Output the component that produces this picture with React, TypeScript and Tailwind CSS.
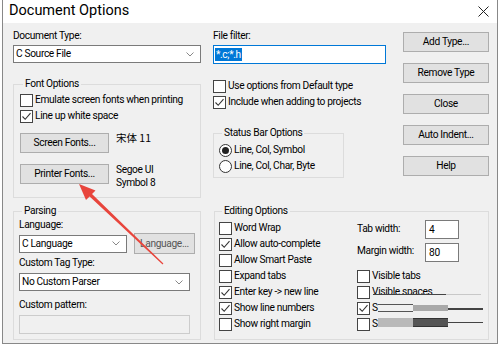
import React from 'react';

const font = "font-['Roboto','Liberation_Sans',sans-serif]";

function Check({ checked, label, extra, className = '' }: { checked?: boolean; label?: string; extra?: React.ReactNode; className?: string }) {
  return (
    <div className={`relative flex items-center h-[16px] ${className}`}>
      <div className="w-[13px] h-[13px] bg-white border border-[#444] flex items-center justify-center shrink-0">
        {checked && (
          <svg width="11" height="11" viewBox="0 0 11 11">
            <path d="M1.5 5.5 L4.2 8.3 L9.5 2.2" fill="none" stroke="#333" strokeWidth="1.1" />
          </svg>
        )}
      </div>
      {label && <span className="ml-[2px] whitespace-nowrap">{label}</span>}
      {extra}
    </div>
  );
}

function Radio({ checked, label }: { checked?: boolean; label: string }) {
  return (
    <div className="flex items-center h-[16px]">
      <div className="w-[13px] h-[13px] rounded-full bg-white border border-[#333] flex items-center justify-center shrink-0">
        {checked && <div className="w-[7px] h-[7px] rounded-full bg-[#222]" />}
      </div>
      <span className="ml-[2px] whitespace-nowrap">{label}</span>
    </div>
  );
}

function Btn({ children, className = '' }: { children: React.ReactNode; className?: string }) {
  return (
    <div
      className={`h-[20px] bg-[#e1e1e1] border border-[#adadad] flex items-center justify-center whitespace-nowrap shrink-0 ${className}`}
    >
      {children}
    </div>
  );
}

function Select({ value, className = '' }: { value: string; className?: string }) {
  return (
    <div className={`h-[18px] bg-white border border-[#7a7a7a] flex items-center justify-between pl-[2px] pr-[6px] ${className}`}>
      <span className="whitespace-nowrap">{value}</span>
      <svg width="8" height="5" viewBox="0 0 8 5">
        <path d="M0.5 0.5 L4 4 L7.5 0.5" fill="none" stroke="#888" strokeWidth="1" />
      </svg>
    </div>
  );
}

function Group({ title, className = '', children }: { title: string; className?: string; children: React.ReactNode }) {
  return (
    <fieldset className={`border border-[#dcdcdc] ${className}`}>
      <legend className="ml-[3px] px-[2px] leading-[14px]">{title}</legend>
      {children}
    </fieldset>
  );
}

export default function App() {
  return (
    <div className={`w-[500px] h-[346px] bg-white overflow-hidden relative ${font} text-[10.2px] tracking-[-0.35px] text-black leading-[14px]`}>
      <div className="ml-[2px] w-[496px] h-[344px] bg-[#f0f0f0] border-x border-b border-[#888] flex flex-col">
        {/* title bar */}
        <div className="h-[23px] bg-white flex items-center justify-between pl-[6px] pr-[8px] shrink-0">
          <span className="text-[14.5px] tracking-normal leading-[18px] mt-[-1px]">Document Options</span>
          <svg width="11" height="11" viewBox="0 0 11 11">
            <path d="M0.5 0.5 L10.5 10.5 M10.5 0.5 L0.5 10.5" stroke="#222" strokeWidth="1" />
          </svg>
        </div>

        <div className="flex pl-[10px] pt-[6px]">
          {/* left column */}
          <div className="w-[188px] flex flex-col">
            <span>Document Type:</span>
            <Select value="C Source File" className="mt-[2px]" />
            <Group title="Font Options" className="mt-[14px] pl-[6px] pb-[8px]">
              <div className="flex flex-col mt-[1px]">
                <Check label="Emulate screen fonts when printing" />
                <Check checked label="Line up white space" />
                <div className="flex mt-[9px]">
                  <Btn className="w-[89px]">Screen Fonts...</Btn>
                  <span className="ml-[7px] mt-[-2px] font-['Noto_Sans_CJK_SC',sans-serif] text-[10.5px] tracking-normal">宋体 11</span>
                </div>
                <div className="flex mt-[11px]">
                  <Btn className="w-[89px]">Printer Fonts...</Btn>
                  <span className="ml-[7px] mt-[-1px] leading-[13px]">
                    Segoe UI
                    <br />
                    Symbol 8
                  </span>
                </div>
              </div>
            </Group>
          </div>

          {/* middle column */}
          <div className="w-[173px] ml-[12px] flex flex-col">
            <span>File filter:</span>
            <div className="mt-[2px] h-[19px] bg-white border border-[#0078d7] flex items-center pl-[1px]">
              <span className="bg-[#0078d7] text-white leading-[13px] px-[1px]">*.c;*.h</span>
            </div>
            <div className="mt-[14px] flex flex-col">
              <Check label="Use options from Default type" className="h-[15px]" />
              <Check checked label="Include when adding to projects" className="h-[15px]" />
            </div>
            <Group title="Status Bar Options" className="mt-[16px] w-[131px] pl-[5px] pb-[3px]">
              <div className="flex flex-col mt-[2px]">
                <Radio checked label="Line, Col, Symbol" />
                <Radio label="Line, Col, Char, Byte" />
              </div>
            </Group>
          </div>

          {/* right buttons */}
          <div className="w-[86px] ml-[17px] flex flex-col gap-[11px] mt-[3px]">
            <Btn>Add Type...</Btn>
            <Btn>Remove Type</Btn>
            <Btn className="border-[#0078d7] border-[1.5px]">Close</Btn>
            <Btn>Auto Indent...</Btn>
            <Btn>Help</Btn>
          </div>
        </div>

        {/* bottom row */}
        <div className="flex pl-[10px] mt-[6px]">
          <Group title="Parsing" className="w-[188px] pl-[5px] pb-[4px]">
            <div className="flex flex-col">
              <span>Language:</span>
              <div className="flex items-center mt-[1px]">
                <Select value="C Language" className="w-[108px]" />
                <Btn className="w-[61px] ml-[7px] h-[21px] text-[#555]">Language...</Btn>
              </div>
              <span className="mt-[2px]">Custom Tag Type:</span>
              <Select value="No Custom Parser" className="mt-[3px] w-[171px]" />
              <span className="mt-[7px]">Custom pattern:</span>
              <div className="mt-[3px] w-[171px] h-[19px] bg-[#f0f0f0] border border-[#cccccc]" />
            </div>
          </Group>

          <Group title="Editing Options" className="ml-[13px] w-[275px] pl-[4px] pb-[7px]">
            <div className="flex mt-[2px]">
              <div className="flex flex-col w-[138px]">
                <Check label="Word Wrap" />
                <Check checked label="Allow auto-complete" />
                <Check label="Allow Smart Paste" />
                <Check label="Expand tabs" />
                <Check checked label="Enter key -> new line" />
                <Check checked label="Show line numbers" />
                <Check label="Show right margin" />
              </div>
              <div className="flex flex-col">
                <div className="flex">
                  <span className="w-[68px] mt-[2px]">Tab width:</span>
                  <div className="w-[34px] h-[19px] bg-white border border-[#7a7a7a] pl-[3px] flex items-center">4</div>
                </div>
                <div className="flex mt-[4px]">
                  <span className="w-[68px] mt-[1px]">Margin width:</span>
                  <div className="w-[34px] h-[19px] bg-white border border-[#7a7a7a] pl-[3px] flex items-center">80</div>
                </div>
                <Check label="Visible tabs" className="mt-[6px]" />
                <Check
                  label="Visible spaces"
                  extra={
                    <>
                      <div className="absolute left-[16px] top-[11px] w-[108px] h-[5px] bg-[#f0f0f0]" />
                      <div className="absolute left-[16px] top-[10px] w-[108px] h-[1px] bg-[#c8c8c8]" />
                      <div className="absolute left-[16px] top-[10px] w-[73px] h-[1px] bg-[#444]" />
                    </>
                  }
                />
                <Check
                  checked
                  label="S"
                  extra={
                    <div className="flex items-start h-[16px] pt-[4px]">
                      <div className="w-[35px] h-[8px] border-y-[1.5px] border-[#555]" />
                      <div className="w-[35px] h-[6px] mt-[1px] bg-[#a9a9a9]" />
                      <div className="w-[35px] h-[2px] mt-[4px] bg-[#444]" />
                    </div>
                  }
                />
                <Check
                  label="S"
                  extra={
                    <div className="flex items-start h-[16px] pt-[2px]">
                      <div className="w-[35px] h-[9px] bg-[#b9b9b9]" />
                      <div className="w-[35px] h-[9px] bg-[#555] border-y border-[#333]" />
                      <div className="w-[35px] h-[1px] mt-[4px] bg-[#444]" />
                    </div>
                  }
                />
              </div>
            </div>
          </Group>
        </div>
      </div>

      {/* red annotation arrow */}
      <svg className="absolute left-0 top-0 pointer-events-none" width="500" height="346" viewBox="0 0 500 346">
        <polygon
          points="79,184 95.5,190.5 92,194 163.4,263.5 162.6,264.4 89.6,196.6 86,200"
          fill="#e8453c"
        />
      </svg>
    </div>
  );
}
